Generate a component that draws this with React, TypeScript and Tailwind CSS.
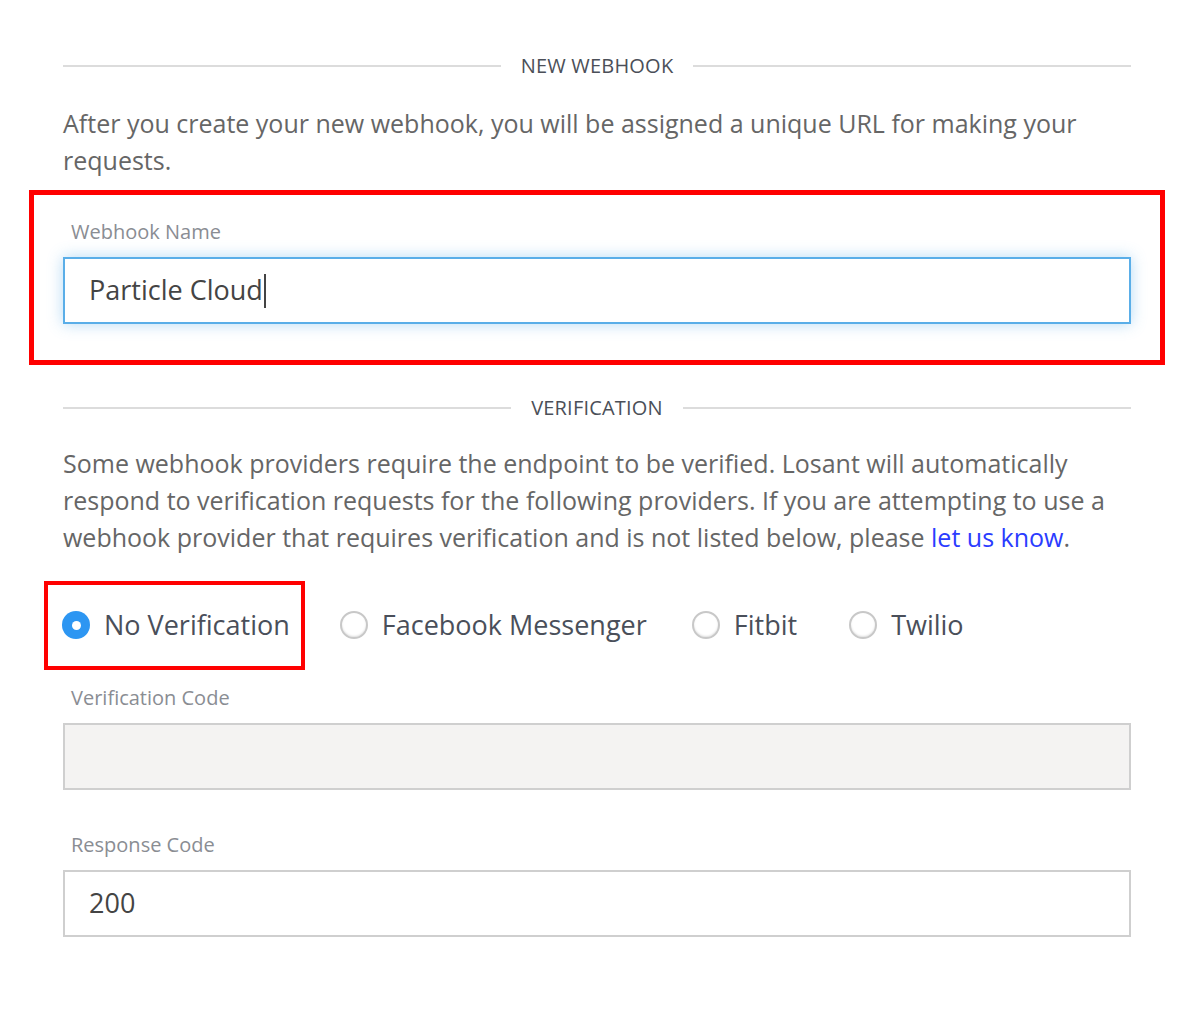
import { useState } from "react";

const font = { fontFamily: '"Open Sans", "Noto Sans", sans-serif' };

function SectionHeader({ title }: { title: string }) {
    return (
        <div className="flex items-center gap-5">
            <div className="h-[2px] flex-1 bg-[#dcdcdc]" />
            <span className="text-[20px] leading-none font-medium text-[#4b4f58] tracking-[0.2px]">{title}</span>
            <div className="h-[2px] flex-1 bg-[#dcdcdc]" />
        </div>
    );
}

function Radio({ label, checked, onClick }: { label: string; checked: boolean; onClick: () => void }) {
    return (
        <label onClick={onClick} className="flex items-center gap-[14px] cursor-pointer">
            {checked ? (
                <span className="flex h-[28px] w-[28px] items-center justify-center rounded-full bg-[#2d96f2]">
                    <span className="h-[9px] w-[9px] rounded-full bg-white" />
                </span>
            ) : (
                <span className="h-[28px] w-[28px] rounded-full border-2 border-[#c8c8c8] bg-white shadow-[inset_0_-1px_2px_rgba(0,0,0,0.12)]" />
            )}
            <span className="text-[27px] text-[#4a4f5a]">{label}</span>
        </label>
    );
}

export default function App() {
    // Which verification provider is selected
    const [provider, setProvider] = useState("none");

    return (
        <div className="min-h-[1018px] bg-white pt-[56px]" style={font}>
            <div className="ml-[63px] w-[1068px]">
                {/* New webhook */}
                <SectionHeader title="NEW WEBHOOK" />
                <p className="mt-[29px] text-[25px] leading-[37px] text-[#666]">
                    After you create your new webhook, you will be assigned a unique URL for making your requests.
                </p>

                <div className="-mx-[34px] mt-[11px] border-[5px] border-[#ff0000] px-[29px] pt-[22px] pb-[36px]">
                    <label className="ml-[8px] block text-[20px] text-[#8a8d93]">Webhook Name</label>
                    <div className="mt-[10px] flex h-[67px] items-center border-2 border-[#5aaee8] px-[24px] shadow-[0_0_14px_rgba(90,174,232,0.45)]">
                        <span className="text-[27px] text-[#444]">Particle Cloud</span>
                        <span className="ml-[1px] h-[34px] w-[2px] bg-[#444]" />
                    </div>
                </div>

                {/* Verification */}
                <div className="mt-[33px]">
                    <SectionHeader title="VERIFICATION" />
                </div>
                <p className="mt-[27px] text-[25px] leading-[37px] text-[#666]">
                    Some webhook providers require the endpoint to be verified. Losant will automatically respond to verification requests for the following providers. If you are attempting to use a webhook provider that requires verification and is not listed below, please{" "}
                    <a href="#" className="text-[#2b3cff]">let us know</a>.
                </p>

                <div className="mt-[25px] flex items-center">
                    <div className="-ml-[19px] border-4 border-[#ff0000] py-[20px] pl-[14px] pr-[11px]">
                        <Radio label="No Verification" checked={provider === "none"} onClick={() => setProvider("none")} />
                    </div>
                    <div className="ml-[35px]">
                        <Radio label="Facebook Messenger" checked={provider === "fb"} onClick={() => setProvider("fb")} />
                    </div>
                    <div className="ml-[45px]">
                        <Radio label="Fitbit" checked={provider === "fitbit"} onClick={() => setProvider("fitbit")} />
                    </div>
                    <div className="ml-[52px]">
                        <Radio label="Twilio" checked={provider === "twilio"} onClick={() => setProvider("twilio")} />
                    </div>
                </div>

                <label className="ml-[8px] mt-[13px] block text-[20px] text-[#8a8d93]">Verification Code</label>
                <div className="mt-[10px] h-[67px] border-2 border-[#cfcfcf] bg-[#f4f3f2]" />

                <label className="ml-[8px] mt-[40px] block text-[20px] text-[#8a8d93]">Response Code</label>
                <div className="mt-[10px] flex h-[67px] items-center border-2 border-[#cfcfcf] px-[24px]">
                    <span className="text-[27px] text-[#444]">200</span>
                </div>
            </div>
        </div>
    );
}
